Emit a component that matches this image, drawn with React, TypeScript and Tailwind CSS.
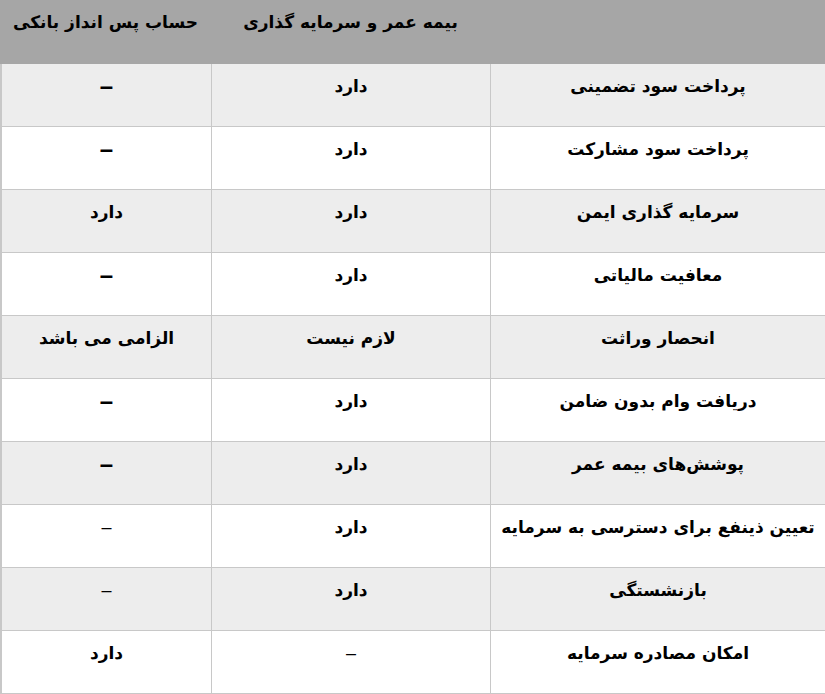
const rows: { feature: string; insurance: string; bank: string; thinIns?: boolean; thinBank?: boolean }[] = [
  { feature: "پرداخت سود تضمینی", insurance: "دارد", bank: "–" },
  { feature: "پرداخت سود مشارکت", insurance: "دارد", bank: "–" },
  { feature: "سرمایه گذاری ایمن", insurance: "دارد", bank: "دارد" },
  { feature: "معافیت مالیاتی", insurance: "دارد", bank: "–" },
  { feature: "انحصار وراثت", insurance: "لازم نیست", bank: "الزامی می باشد" },
  { feature: "دریافت وام بدون ضامن", insurance: "دارد", bank: "–" },
  { feature: "پوشش‌های بیمه عمر", insurance: "دارد", bank: "–" },
  { feature: "تعیین ذینفع برای دسترسی به سرمایه", insurance: "دارد", bank: "–", thinBank: true },
  { feature: "بازنشستگی", insurance: "دارد", bank: "–", thinBank: true },
  { feature: "امکان مصادره سرمایه", insurance: "–", bank: "دارد", thinIns: true },
];

const Cell = ({ text, thin, last }: { text: string; thin?: boolean; last?: boolean }) => {
  const isDash = text === "–";
  return (
    <div
      className={
        "h-[63px] border-b border-[#c8c8c8] pt-[9px] text-center leading-[26px] " +
        (last ? "border-l-2 " : "border-l ")
      }
    >
      {isDash ? (
        <span
          className={thin ? "font-normal text-[18px]" : "font-bold text-[24px]"}
          style={{ fontFamily: "'Liberation Sans', Arial, sans-serif" }}
        >
          –
        </span>
      ) : (
        <span className="font-bold text-[17px]">{text}</span>
      )}
    </div>
  );
};

export default function App() {
  return (
    <div
      dir="rtl"
      className="w-[825px] h-[694px] overflow-hidden bg-white text-black"
      style={{ fontFamily: "'DejaVu Sans', Tahoma, sans-serif" }}
    >
      <div className="grid grid-cols-[335px_279px_211px] h-[64px] bg-[#a6a6a6] font-bold text-[17px] leading-[26px]">
        <div />
        <div className="pt-[9px] text-center">بیمه عمر و سرمایه گذاری</div>
        <div className="pt-[9px] text-center">حساب پس انداز بانکی</div>
      </div>
      {rows.map((r, i) => (
        <div
          key={i}
          className={"grid grid-cols-[335px_279px_211px] " + (i % 2 === 0 ? "bg-[#ededed]" : "bg-white")}
        >
          <Cell text={r.feature} />
          <Cell text={r.insurance} thin={r.thinIns} />
          <Cell text={r.bank} thin={r.thinBank} last />
        </div>
      ))}
    </div>
  );
}
